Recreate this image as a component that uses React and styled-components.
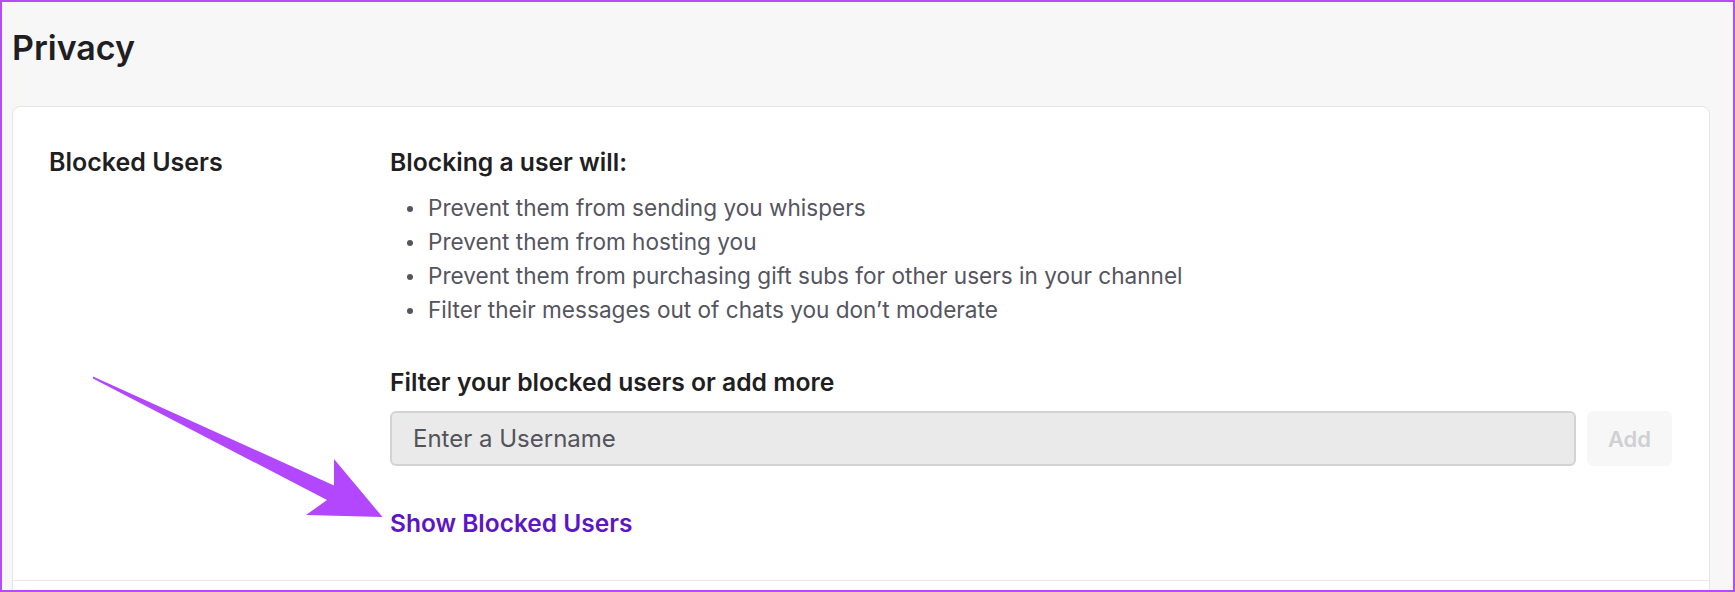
import styled, { createGlobalStyle } from "styled-components";

const GlobalStyle = createGlobalStyle`
  * { box-sizing: border-box; }
  html, body {
    margin: 0;
    padding: 0;
    background: #f7f7f8;
    font-family: Inter, "Noto Sans", sans-serif;
    -webkit-font-smoothing: antialiased;
  }
`;

const StyledPage = styled.div`
  position: relative;
  height: 592px;
  overflow: hidden;
  border: 2px solid #b44cf8;
  background: #f7f7f8;
  padding: 26px 23px 0 10px;
`;

const StyledTitle = styled.h1`
  margin: 0 0 38px;
  font-size: 34px;
  line-height: 40px;
  font-weight: 600;
  color: #1f1f23;
`;

const StyledCard = styled.div`
  background: #fff;
  border: 1px solid #e5e5e9;
  border-radius: 8px;
`;

const StyledSection = styled.div`
  display: grid;
  grid-template-columns: 341px 1fr;
  padding: 40px 37px 42px 36px;
  border-top: ${({ $divided }) => ($divided ? "1px solid #e8e8eb" : "none")};
  min-height: ${({ $divided }) => ($divided ? "60px" : "auto")};
`;

const StyledLabel = styled.div`
  font-size: 25px;
  line-height: 30px;
  font-weight: 600;
  color: #1f1f23;
`;

const StyledContent = styled.div`
  display: flex;
  flex-direction: column;
`;

const StyledHeading = styled.div`
  font-size: 24.7px;
  line-height: 30px;
  font-weight: 600;
  color: #1f1f23;
  margin-top: ${({ $spaced }) => ($spaced ? "40px" : "0")};
`;

const StyledList = styled.ul`
  list-style: none;
  margin: 14px 0 0;
  padding: 0;
`;

const StyledItem = styled.li`
  position: relative;
  padding-left: 38px;
  font-size: 22.6px;
  line-height: 34px;
  color: #55555f;

  &::before {
    content: "";
    position: absolute;
    left: 17px;
    top: 15px;
    width: 6px;
    height: 6px;
    border-radius: 50%;
    background: #55555f;
  }
`;

const StyledInputRow = styled.div`
  display: flex;
  gap: 11px;
  margin-top: 14px;
`;

const StyledInput = styled.input`
  flex: 1;
  height: 55px;
  border: 2px solid #d3d3d6;
  border-radius: 6px;
  background: #eaeaeb;
  padding: 0 21px;
  font-family: inherit;
  font-size: 24px;
  color: #1f1f23;
  outline: none;

  &::placeholder {
    color: #53535a;
  }
`;

const StyledAddButton = styled.button`
  width: 85px;
  height: 55px;
  border: none;
  border-radius: 6px;
  background: #f7f7f8;
  color: #d0d0d3;
  font-family: inherit;
  font-size: 22px;
  font-weight: 600;
`;

const StyledLink = styled.a`
  margin-top: 42px;
  align-self: flex-start;
  font-size: 24.5px;
  line-height: 30px;
  font-weight: 600;
  color: #5c16c5;
  text-decoration: none;
`;

const StyledArrow = styled.svg`
  position: absolute;
  left: 78px;
  top: 358px;
  width: 320px;
  height: 180px;
  pointer-events: none;
`;

const effects = [
  "Prevent them from sending you whispers",
  "Prevent them from hosting you",
  "Prevent them from purchasing gift subs for other users in your channel",
  "Filter their messages out of chats you don\u2019t moderate",
];

export default function App() {
  return (
    <>
      <GlobalStyle />
      <StyledPage>
        <StyledTitle>Privacy</StyledTitle>
        <StyledCard>
          <StyledSection>
            <StyledLabel>Blocked Users</StyledLabel>
            <StyledContent>
              <StyledHeading>Blocking a user will:</StyledHeading>
              <StyledList>
                {effects.map((text) => (
                  <StyledItem key={text}>{text}</StyledItem>
                ))}
              </StyledList>
              <StyledHeading $spaced>Filter your blocked users or add more</StyledHeading>
              <StyledInputRow>
                <StyledInput placeholder="Enter a Username" />
                <StyledAddButton disabled>Add</StyledAddButton>
              </StyledInputRow>
              <StyledLink href="#">Show Blocked Users</StyledLink>
            </StyledContent>
          </StyledSection>
          <StyledSection $divided />
        </StyledCard>
        <StyledArrow viewBox="0 0 320 180">
          <polygon
            points="13,16.5 254,125.5 254,99 302.5,157 226,155 247,140 13,18.5"
            fill="#b347fd"
          />
        </StyledArrow>
      </StyledPage>
    </>
  );
}
